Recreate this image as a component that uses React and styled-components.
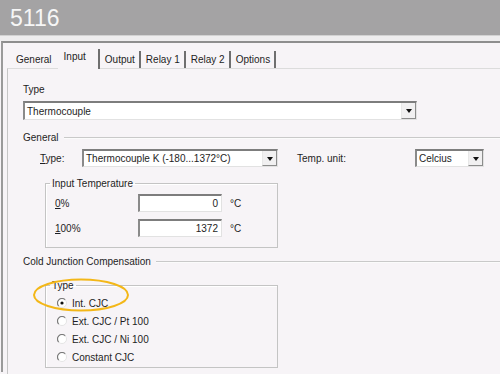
import React from 'react';
import styled, {createGlobalStyle} from 'styled-components';

const GlobalStyle = createGlobalStyle`
  html, body {
    margin: 0;
    padding: 0;
    width: 500px;
    height: 374px;
    overflow: hidden;
    background: #f7f4f7;
    font-family: "Liberation Sans", Arial, sans-serif;
    font-size: 10px;
    color: #1e1e24;
  }
`;

const Page = styled.div`
  position: relative;
  width: 500px;
  height: 374px;
  overflow: hidden;
`;

const TitleBar = styled.div`
  height: 35px;
  background: #a4a3a4;
  color: #f6f6f6;
  font-size: 23px;
  line-height: 36px;
  padding-left: 10px;
  box-sizing: border-box;
`;

const Strip = styled.div`
  height: 6px;
  background: #eeedee;
  border-top: 1px solid #d2d2d2;
  box-sizing: border-box;
`;

const Window = styled.div`
  margin-left: 1px;
  border-top: 2px solid #8e8e8e;
  border-left: 2px solid #9a9a9a;
  padding-top: 5px;
  height: 331px;
  box-sizing: border-box;
`;

const TabRow = styled.div`
  display: flex;
  align-items: flex-end;
  height: 20px;
  margin-left: 8px;
`;

const Tab = styled.div`
  height: ${p => (p.$active ? 20 : 17)}px;
  line-height: ${p => (p.$active ? 15 : 17)}px;
  padding: ${p => (p.$active ? '0 12px 0 6px' : '0 4px 0 5px')};
  border-right: 2px solid ${p => (p.$noBorder ? 'transparent' : '#6f6f6f')};
  margin-bottom: ${p => (p.$active ? -1 : 0)}px;
  background: #f7f4f7;
  position: relative;
  z-index: ${p => (p.$active ? 1 : 0)};
  white-space: nowrap;
`;

const Panel = styled.div`
  margin-left: 4px;
  border-top: 1px solid #dcdcdc;
  border-left: 1px solid #c6c6c6;
  padding-left: 15px;
  height: 306px;
`;

const Label = styled.div`
  line-height: 13px;
  margin-top: ${p => p.$top || 0}px;
`;

const Combo = styled.div`
  display: flex;
  width: ${p => p.$width}px;
  height: ${p => p.$height || 18}px;
  margin-top: ${p => p.$top || 0}px;
  background: #fff;
  border-top: 2px solid #7d7d7d;
  border-left: 2px solid #8a8a8a;
  border-right: 1px solid #e2e2e2;
  border-bottom: 1px solid #e2e2e2;
  box-sizing: border-box;
`;

const ComboText = styled.div`
  flex: 1;
  padding-left: 2px;
  display: flex;
  align-items: center;
  white-space: nowrap;
  overflow: hidden;
`;

const ComboButton = styled.div`
  width: 15px;
  background: #f1f0f1;
  border-left: 1px solid #e8e8e8;
  border-right: 1px solid #8c8c8c;
  border-bottom: 1px solid #8c8c8c;
  box-sizing: border-box;
  display: flex;
  align-items: center;
  justify-content: center;
`;

const Arrow = styled.div`
  width: 0;
  height: 0;
  border-left: 3.5px solid transparent;
  border-right: 3.5px solid transparent;
  border-top: 4px solid #111;
  margin-top: 1px;
`;

const Section = styled.div`
  display: flex;
  align-items: center;
  gap: 5px;
  line-height: 13px;
  margin-top: ${p => p.$top}px;
`;

const Rule = styled.div`
  flex: 1;
  border-top: 1px solid #c9c9c9;
  border-bottom: 1px solid #fbfbfb;
`;

const Row = styled.div`
  display: flex;
  align-items: center;
  margin-top: ${p => p.$top || 0}px;
  margin-left: ${p => p.$left || 0}px;
`;

const RowLabel = styled.div`
  width: ${p => p.$width}px;
  margin-left: ${p => p.$gap || 0}px;
  white-space: nowrap;
`;

const Group = styled.fieldset`
  margin: ${p => p.$top}px 0 0 22px;
  width: 233px;
  height: ${p => p.$height}px;
  box-sizing: border-box;
  padding: 0 0 0 9px;
  border: 1px solid #c4c4c4;
  box-shadow: 1px 1px 0 #ffffff inset;
`;

const Legend = styled.legend`
  padding: 0 2px;
  margin-left: -5px;
  line-height: 13px;
`;

const NumInput = styled.div`
  width: 84px;
  height: 18px;
  box-sizing: border-box;
  background: #fff;
  border-top: 2px solid #7d7d7d;
  border-left: 2px solid #8a8a8a;
  border-right: 1px solid #e2e2e2;
  border-bottom: 1px solid #e2e2e2;
  text-align: right;
  padding-right: 3px;
  line-height: 15px;
`;

const Unit = styled.div`
  margin-left: 8px;
`;

const RadioRow = styled.div`
  display: flex;
  align-items: center;
  height: 18px;
  gap: 5px;
  margin-left: 2px;
  margin-top: ${p => p.$top || 0}px;
`;

const Ellipse = styled.svg`
  position: absolute;
  left: 32px;
  top: 278px;
  pointer-events: none;
`;

const U = styled.span`
  text-decoration: underline;
`;

function Radio({checked}) {
    return (
        <svg width="10" height="10" viewBox="0 0 10 10">
            <circle cx="5" cy="5" r="4.5" fill="#fff" />
            <path d="M8.2 1.8 A4.5 4.5 0 0 0 1.8 8.2" stroke="#7a7a7a" strokeWidth="1.2" fill="none" />
            <path d="M1.8 8.2 A4.5 4.5 0 0 0 8.2 1.8" stroke="#e4e4e4" strokeWidth="1" fill="none" />
            {checked && <circle cx="5" cy="5" r="1.6" fill="#111" />}
        </svg>
    );
}

const tabs = ['General', 'Input', 'Output', 'Relay 1', 'Relay 2', 'Options'];
const cjc = ['Int. CJC', 'Ext. CJC / Pt 100', 'Ext. CJC / Ni 100', 'Constant CJC'];

const App = () => {
    return (
        <Page>
            <GlobalStyle />
            <TitleBar>5116</TitleBar>
            <Strip />
            <Window>
                <TabRow>
                    {tabs.map((t, i) => (
                        <Tab key={t} $active={t === 'Input'} $noBorder={i === 0}>
                            {t}
                        </Tab>
                    ))}
                </TabRow>
                <Panel>
                    <Label $top={14}>Type</Label>
                    <Combo $width={394} $height={19} $top={5}>
                        <ComboText>Thermocouple</ComboText>
                        <ComboButton><Arrow /></ComboButton>
                    </Combo>

                    <Section $top={11}>General<Rule /></Section>
                    <Row $top={5} $left={17}>
                        <RowLabel $width={42}><U>T</U>ype:</RowLabel>
                        <Combo $width={196}>
                            <ComboText>Thermocouple K (-180...1372°C)</ComboText>
                            <ComboButton><Arrow /></ComboButton>
                        </Combo>
                        <RowLabel $width={118} $gap={19}>Temp. unit:</RowLabel>
                        <Combo $width={69}>
                            <ComboText>Celcius</ComboText>
                            <ComboButton><Arrow /></ComboButton>
                        </Combo>
                    </Row>

                    <Group $top={10} $height={71}>
                        <Legend>Input Temperature</Legend>
                        <Row $top={4}>
                            <RowLabel $width={83}><U>0</U>%</RowLabel>
                            <NumInput>0</NumInput>
                            <Unit>°C</Unit>
                        </Row>
                        <Row $top={7}>
                            <RowLabel $width={83}><U>1</U>00%</RowLabel>
                            <NumInput>1372</NumInput>
                            <Unit>°C</Unit>
                        </Row>
                    </Group>

                    <Section $top={7}>Cold Junction Compensation<Rule /></Section>

                    <Group $top={11} $height={89}>
                        <Legend>Type</Legend>
                        {cjc.map((c, i) => (
                            <RadioRow key={c} $top={i === 0 ? 2 : 0}>
                                <Radio checked={i === 0} />
                                {c}
                            </RadioRow>
                        ))}
                    </Group>
                </Panel>
            </Window>
            <Ellipse width="98" height="34" viewBox="0 0 98 34">
                <ellipse cx="49" cy="17" rx="47" ry="15.5" fill="none" stroke="#f3b718" strokeWidth="2" />
            </Ellipse>
        </Page>
    );
};

export default App;
